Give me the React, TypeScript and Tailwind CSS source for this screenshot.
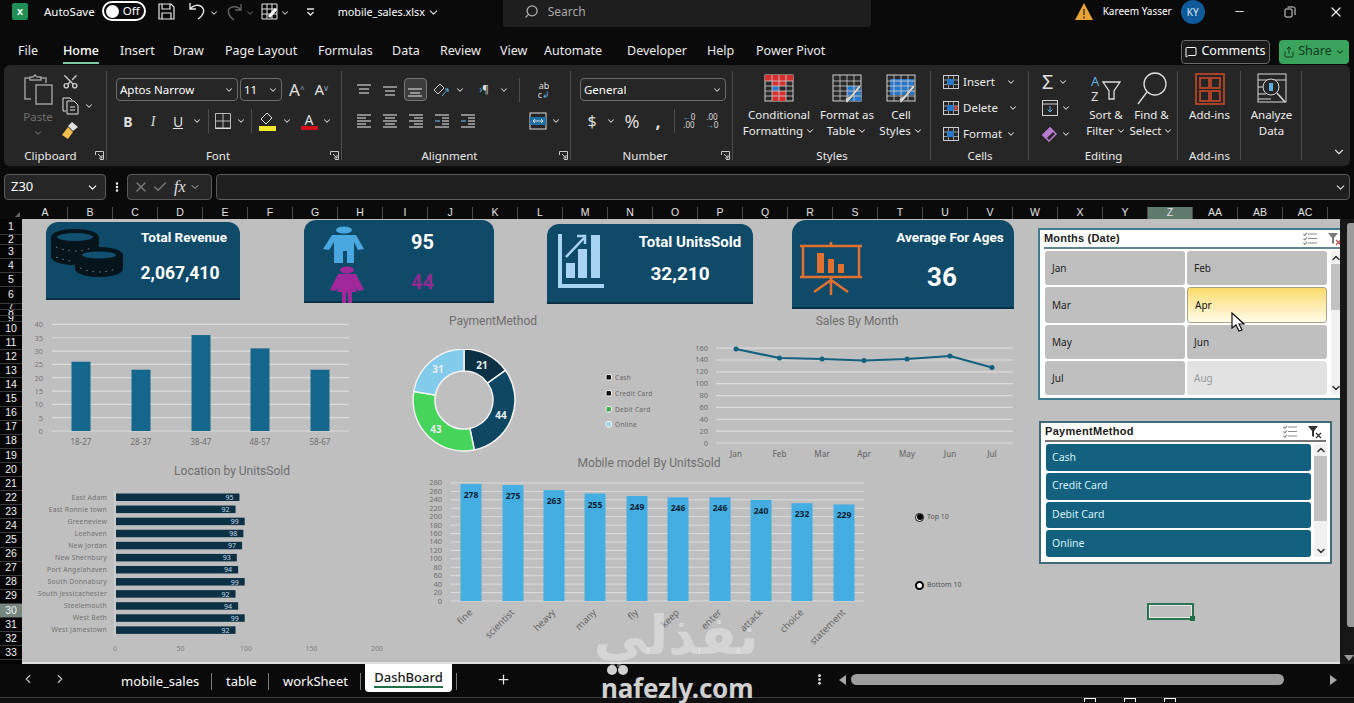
import React from 'react';
import { ChevronDown, ChevronLeft, ChevronRight, Plus, Search, X, Check, Minus, MessageSquare, Share, Scissors, MoreVertical } from 'lucide-react';

const COLS = ['A','B','C','D','E','F','G','H','I','J','K','L','M','N','O','P','Q','R','S','T','U','V','W','X','Y','Z','AA','AB','AC'];
const ROWS: [string, string][] = [
  ['1','h-[16px]'],['2','h-[10px]'],['3','h-[14px]'],['4','h-[14px]'],['5','h-[14px]'],['6','h-[17px]'],['7','h-[6px]'],['8','h-[6px]'],['9','h-[6px]'],
  ...Array.from({ length: 24 }, (_, i) => [String(i + 10), 'h-[14.1px]'] as [string, string]),
];
const TABS = [
  ['File','w-[45px]'],['Home','w-[57px]'],['Insert','w-[53px]'],['Draw','w-[52px]'],['Page Layout','w-[93px]'],['Formulas','w-[74px]'],
  ['Data','w-[48px]'],['Review','w-[60px]'],['View','w-[44px]'],['Automate','w-[83px]'],['Developer','w-[80px]'],['Help','w-[49px]'],['Power Pivot','w-[90px]'],
];
const AGE = [[81,26,'18-27'],[141,23,'28-37'],[201,36,'38-47'],[260,31,'48-57'],[320,23,'58-67']] as const;
const MONTHS = [['Jan',736,349],['Feb',779.5,358],['Mar',822,359],['Apr',864,360.5],['May',907,359],['Jun',950,356],['Jul',992,367.5]] as const;
const LOCATIONS: [string, number][] = [['East Adam',95],['East Ronnie town',92],['Greeneview',99],['Leehaven',98],['New Jordan',97],['New Shernbury',93],['Port Angelahaven',94],['South Donnabury',99],['South Jessicachester',92],['Steelemouth',94],['West Beth',99],['West Jamestown',92]];
const MODELS: [string, number, number][] = [['fine',278,471],['scientist',275,513],['heavy',263,554],['many',255,595],['fly',249,637],['keep',246,678],['enter',246,720],['attack',240,761],['choice',232,802],['statement',229,844]];
const DONUT: [number, string, number, number][] = [[21,'#0c3044',482,365],[44,'#0f4763',501,415],[43,'#47d45a',436,429],[31,'#83cbeb',438,369]];

function arc(start: number, end: number, R: number, r: number) {
  const p = (a: number, q: number) => `${464 + q * Math.sin(a)} ${400 - q * Math.cos(a)}`;
  const big = end - start > Math.PI ? 1 : 0;
  return `M${p(start, R)}A${R} ${R} 0 ${big} 1 ${p(end, R)}L${p(end, r)}A${r} ${r} 0 ${big} 0 ${p(start, r)}Z`;
}

function Chev({ className = '' }: { className?: string }) {
  return <ChevronDown size={10} strokeWidth={2.5} className={`text-[#d6d6d6] shrink-0 ${className}`} />;
}

function Lines({ rows, color = '#d0d0d0' }: { rows: [number, number, number, string?][]; color?: string }) {
  return (
    <svg width="16" height="16" viewBox="0 0 16 16">
      {rows.map(([a, b, y, c], i) => <line key={i} x1={a} x2={b} y1={y} y2={y} stroke={c || color} strokeWidth="1.2" />)}
    </svg>
  );
}

function Launcher() {
  return (
    <svg width="9" height="9" viewBox="0 0 9 9" className="absolute right-[3px] bottom-[6px]" fill="none" stroke="#c8c8c8">
      <path d="M.5 4V.5H8.5V8.5H5M3 3l4 4M7 4v3H4" />
    </svg>
  );
}

function Group({ width, label, launcher, labelPad = '', children }: { width: string; label?: string; launcher?: boolean; labelPad?: string; children: React.ReactNode }) {
  return (
    <div className={`relative h-full shrink-0 flex flex-col ${width}`}>
      <div className="h-[83px] relative">{children}</div>
      <div className={`text-center text-[11.5px] leading-[16px] text-[#e8e8e8] ${labelPad}`}>{label}</div>
      {launcher && <Launcher />}
      <div className="absolute right-0 top-[6px] bottom-[6px] w-px bg-[#4d4d4d]" />
    </div>
  );
}

function Cell({ w, children }: { w: string; children?: React.ReactNode }) {
  return <div className={`flex items-center justify-center shrink-0 h-full ${w}`}>{children}</div>;
}

function Divider({ w }: { w: string }) {
  return <div className={`flex justify-center shrink-0 ${w}`}><div className="w-px h-[24px] bg-[#4d4d4d]" /></div>;
}

function BigButton({ w, lines, caret, icon }: { w: string; lines: string[]; caret?: boolean; icon: React.ReactNode }) {
  return (
    <div className={`flex flex-col items-center shrink-0 ${w}`}>
      <div className="h-[37px] flex items-center justify-center">{icon}</div>
      {lines.map((l, i) => (
        <div key={l} className="flex items-center gap-[2px] text-[11.5px] leading-[16px] text-[#ececec] whitespace-nowrap">
          {l}{caret && i === lines.length - 1 && <Chev />}
        </div>
      ))}
    </div>
  );
}

function TableIcon({ fill }: { fill: React.ReactNode }) {
  return (
    <svg width="34" height="32" viewBox="0 0 34 32" fill="none">
      <rect x="3" y="2" width="28" height="26" fill="#2a2a2a" stroke="#cfcfcf" />
      {fill}
      {[8,13,18,23].map(y => <line key={y} x1="3" x2="31" y1={y} y2={y} stroke="#cfcfcf" strokeWidth=".8" />)}
      {[10,17,24].map(x => <line key={x} y1="2" y2="28" x1={x} x2={x} stroke="#cfcfcf" strokeWidth=".8" />)}
    </svg>
  );
}

function Brush() {
  return <path d="M31 14L20 27l-3 3c-2-1-2-3-1-5l4-2 9-11z" fill="#d8d8d8" stroke="#222" strokeWidth=".6" />;
}

function SmallTableIcon({ accent, x }: { accent: string; x?: boolean }) {
  return (
    <svg width="16" height="16" viewBox="0 0 16 16" fill="none">
      <rect x=".5" y="1.5" width="15" height="13" stroke="#cfcfcf" />
      <path d="M.5 6h15M.5 10.500h15M5.500 1.500v13M10.500 1.500v13" stroke="#cfcfcf" strokeWidth=".7" />
      <rect x="4" y="5" width="7" height="6" fill={accent} />
      {x && <path d="M11 6l4 4m0-4l-4 4" stroke="#e0504a" strokeWidth="1.3" />}
    </svg>
  );
}

function SlicerIcons({ light }: { light?: boolean }) {
  return (
    <div className="flex items-center gap-[11px]">
      <svg width="14" height="13" viewBox="0 0 14 13" fill="none" stroke="#8a8a8a" strokeWidth="1.2">
        <path d="M5 2h9M5 6.500h9M5 11h9M.5 2l1.300 1.300L4 .8M.5 6.500l1.300 1.300L4 5.300M.5 11l1.300 1.300L4 9.800" />
      </svg>
      <svg width="14" height="14" viewBox="0 0 14 14">
        <path d="M0 1h10L6 6v6L4 11V6z" fill={light ? '#7a7a7a' : '#333'} />
        <path d="M8 8l5 5m0-5l-5 5" stroke={light ? '#c0504d' : '#333'} strokeWidth="1.300" />
      </svg>
    </div>
  );
}

function ScrollStrip({ className, thumb }: { className: string; thumb: string }) {
  return (
    <div className={`flex flex-col items-center justify-between bg-[#f1f1f1] ${className}`}>
      <ChevronDown size={12} strokeWidth={3} className="rotate-180 text-[#333] shrink-0" />
      <div className={`w-full bg-[#c2c2c2] shrink-0 ${thumb}`} />
      <div className="flex-1" />
      <ChevronDown size={12} strokeWidth={3} className="text-[#333] shrink-0" />
    </div>
  );
}

function Sheet() {
  return (
    <div className="relative flex-1 h-full bg-[#bfbfbf] overflow-hidden border-b-2 border-[#e0e0e0]">
      {/* KPI cards */}
      <div className="absolute left-[24px] top-[3px] w-[194px] h-[78px] rounded-t-[12px] bg-[#0f4a68] border-b-2 border-[#0b3146] flex font-['Roboto',sans-serif]">
        <svg width="74" height="50" viewBox="0 0 74 50" className="mt-[7px] ml-[4px] shrink-0">
          <g fill="#06141c">
            <ellipse cx="25" cy="8" rx="24" ry="8" /><rect x="1" y="8" width="48" height="20" /><ellipse cx="25" cy="28" rx="24" ry="8" />
            <ellipse cx="49" cy="26" rx="24" ry="8" /><rect x="25" y="26" width="48" height="14" /><ellipse cx="49" cy="40" rx="24" ry="8" />
          </g>
          <ellipse cx="25" cy="8" rx="18" ry="4" fill="#12506f" /><ellipse cx="49" cy="26" rx="17" ry="3.500" fill="#12506f" />
          <path d="M6 18q19 8 38 0M6 28q8 3 15 4M30 39q19 8 38 0" fill="none" stroke="#7d8c94" strokeWidth="1" strokeDasharray="1.500 5" />
        </svg>
        <div className="flex-1 flex flex-col items-center pt-[6px] pr-[4px] text-white font-bold">
          <div className="text-[13.500px] leading-[18px] ml-[8px]">Total Revenue</div>
          <div className="text-[17.500px] leading-[24px] mt-[15px]">2,067,410</div>
        </div>
      </div>

      <div className="absolute left-[282px] top-[1px] w-[190px] h-[83px] rounded-t-[12px] bg-[#0f4a68] border-b-2 border-[#0b3146] flex font-['Roboto',sans-serif]">
        <svg width="50" height="80" viewBox="0 0 50 80" className="ml-[15px] mt-[3px] shrink-0">
          <g fill="#4aa8e0">
            <ellipse cx="25" cy="7" rx="8" ry="3.500" />
            <path d="M13 12h24l8 14 -6 1-4-8v21H28V28h-4v12H15V19l-5 8-6-1z" />
          </g>
          <g fill="#a0289a">
            <ellipse cx="28" cy="47" rx="7" ry="3.500" />
            <path d="M19 51h18l8 16-6 1-3-4 2 5H33v11h-4V70h-2v10h-4V69h-5l2-5-3 4-6-1z" />
          </g>
        </svg>
        <div className="flex-1 flex flex-col items-center pr-[18px] font-bold text-[20px] leading-[26px]">
          <div className="text-white mt-[9px]">95</div>
          <div className="text-[#8e2a90] mt-[14px]">44</div>
        </div>
      </div>

      <div className="absolute left-[525px] top-[5px] w-[206px] h-[80px] rounded-t-[12px] bg-[#0f4a68] border-b-2 border-[#0b3146] flex font-['Roboto',sans-serif]">
        <svg width="46" height="56" viewBox="0 0 46 56" className="ml-[11px] mt-[10px] shrink-0">
          <g fill="#a9d3f2">
            <path d="M0 0h4v50h42v4H0z" /><rect x="8" y="29" width="9" height="15" /><rect x="20" y="15" width="9" height="29" /><rect x="33" y="1" width="9" height="43" />
          </g>
          <path d="M8 23L26 4M19 2h8v8" fill="none" stroke="#a9d3f2" strokeWidth="2.500" />
        </svg>
        <div className="flex-1 flex flex-col items-center text-white font-bold pl-[3px]">
          <div className="text-[15px] leading-[20px] mt-[8px] ml-[20px]">Total UnitsSold</div>
          <div className="text-[19px] leading-[26px] mt-[9px]">32,210</div>
        </div>
      </div>

      <div className="absolute left-[770px] top-[1px] w-[222px] h-[89px] rounded-t-[14px] bg-[#0f4a68] border-b-2 border-[#0b3146] flex font-['Roboto',sans-serif]">
        <svg width="64" height="56" viewBox="0 0 64 56" className="ml-[8px] mt-[22px] shrink-0">
          <g fill="none" stroke="#e2702e" strokeWidth="2.500">
            <path d="M0 4h62M3 4v30M59 4v30M0 35h62M31 0v4M31 35v18M31 38L14 50M31 38l17 12" />
          </g>
          <g fill="#e2702e"><rect x="17" y="11" width="7" height="20" /><rect x="28" y="17" width="6" height="14" /><rect x="38" y="22" width="6" height="9" /></g>
        </svg>
        <div className="flex-1 flex flex-col items-center text-white font-bold">
          <div className="text-[13.500px] leading-[18px] mt-[8px] ml-[22px]">Average For Ages</div>
          <div className="text-[26px] leading-[32px] mt-[15px] ml-[6px]">36</div>
        </div>
      </div>

      {/* age chart */}
      <svg className="absolute left-[8px] top-[91px]" width="345" height="140" viewBox="30 310 345 140">
        {[40,35,30,25,20,15,10,5,0].map(v => {
          const y = 431 - v * 2.665;
          return (
            <g key={v}>
              <line x1="52" x2="349" y1={y} y2={y} stroke="#dcdcdc" strokeWidth="1.200" />
              <text x="43" y={y + 3} textAnchor="end" fontSize="7.500" fill="#777">{v}</text>
            </g>
          );
        })}
        {AGE.map(([x, v, l]) => (
          <g key={l}>
            <rect x={x - 9.500} y={431 - v * 2.665} width="19" height={v * 2.665} fill="#14668c" />
            <text x={x} y="445" textAnchor="middle" fontSize="8" fill="#6d6d6d">{l}</text>
          </g>
        ))}
      </svg>

      {/* donut */}
      <div className="absolute left-[391px] top-[94px] w-[160px] text-center font-['Roboto',sans-serif] text-[12px] leading-[16px] text-[#6e6e6e]">PaymentMethod</div>
      <svg className="absolute left-[380px] top-[130px]" width="260" height="115" viewBox="402 349 260 115">
        {DONUT.reduce<{ a: number; els: React.ReactNode[] }>((acc, [v, c, lx, ly]) => {
          const next = acc.a + (v / 139) * Math.PI * 2;
          acc.els.push(
            <g key={v}>
              <path d={arc(acc.a, next, 51, 29)} fill={c} stroke="#f2f2f2" strokeWidth="1.500" />
              <text x={lx} y={ly + 3.500} textAnchor="middle" fontSize="10" fontWeight="700" fill="#e8eef0">{v}</text>
            </g>
          );
          acc.a = next;
          return acc;
        }, { a: 0, els: [] }).els}
        {[['Cash','#111',377],['Credit Card','#111',393],['Debit Card','#47a84f',409],['Online','#9bd5e8',424]].map(([l, c, y]) => (
          <g key={l as string}>
            <rect x="606" y={(y as number) - 2.500} width="5.500" height="5.500" rx="1.500" fill={c as string} stroke="#f4f4f4" />
            <text x="615" y={(y as number) + 2.500} fontSize="6.500" fill="#666" letterSpacing=".3">{l}</text>
          </g>
        ))}
      </svg>

      {/* sales by month */}
      <div className="absolute left-[755px] top-[94px] w-[160px] text-center font-['Roboto',sans-serif] text-[12px] leading-[16px] text-[#6e6e6e]">Sales By Month</div>
      <svg className="absolute left-[668px] top-[122px]" width="350" height="118" viewBox="690 341 350 118">
        {[160,140,120,100,80,60,40,20,0].map(v => {
          const y = 443 - v * 0.593;
          return (
            <g key={v}>
              <line x1="716" x2="1013" y1={y} y2={y} stroke="#dcdcdc" strokeWidth="1.200" />
              <text x="708" y={y + 2.500} textAnchor="end" fontSize="7.500" fill="#6d6d6d">{v}</text>
            </g>
          );
        })}
        <polyline points={MONTHS.map(m => `${m[1]},${m[2]}`).join(' ')} fill="none" stroke="#14607f" strokeWidth="2.200" />
        {MONTHS.map(([l, x, y]) => (
          <g key={l}>
            <circle cx={x} cy={y} r="2.500" fill="#14607f" />
            <text x={x} y="457" textAnchor="middle" fontSize="8" fontWeight="500" fill="#6d6d6d">{l}</text>
          </g>
        ))}
      </svg>

      {/* location */}
      <div className="absolute left-[130px] top-[244px] w-[160px] text-center font-['Roboto',sans-serif] text-[12px] leading-[16px] text-[#6e6e6e]">Location by UnitsSold</div>
      <svg className="absolute left-[8px] top-[270px]" width="370" height="172" viewBox="30 489 370 172">
        <line x1="115" x2="115" y1="491" y2="637" stroke="#d8d8d8" />
        {LOCATIONS.map(([l, v], i) => {
          const y = 497 + i * 12.080;
          return (
            <g key={l}>
              <text x="107" y={y + 2.500} textAnchor="end" fontSize="6.800" fill="#727272" letterSpacing=".2">{l}</text>
              <rect x="116" y={y - 3.500} width={v * 1.31 - 1} height="7.500" fill="#0c3044" />
              <text x={116 + v * 1.31 - 7} y={y + 3} textAnchor="end" fontSize="7" fill="#c5dbe8">{v}</text>
            </g>
          );
        })}
        {[0,50,100,150,200].map(v => <text key={v} x={115 + v * 1.31} y="651" textAnchor="middle" fontSize="7" fill="#808080">{v}</text>)}
      </svg>

      {/* mobile models */}
      <div className="absolute left-[537px] top-[236px] w-[180px] text-center font-['Roboto',sans-serif] text-[12px] leading-[16px] text-[#6e6e6e]">Mobile model By UnitsSold</div>
      <svg className="absolute left-[398px] top-[258px]" width="480" height="180" viewBox="420 477 480 180">
        {Array.from({ length: 15 }, (_, i) => i * 20).map(v => {
          const y = 601 - v * 0.4215;
          return (
            <g key={v}>
              <line x1="450" x2="864" y1={y} y2={y} stroke="#dcdcdc" strokeWidth="1" />
              <text x="442" y={y + 2.500} textAnchor="end" fontSize="7.500" fill="#707070">{v}</text>
            </g>
          );
        })}
        {MODELS.map(([l, v, x]) => {
          const top = 601 - v * 0.4215;
          return (
            <g key={l}>
              <rect x={x - 10.500} y={top} width="21" height={601 - top} fill="#44ade2" />
              <text x={x} y={top + 14} textAnchor="middle" fontSize="8.500" fontWeight="700" fill="#0d2233">{v}</text>
              <text transform={`translate(${x + 2} 613) rotate(-45)`} textAnchor="end" fontSize="9.500" fill="#666">{l}</text>
            </g>
          );
        })}
      </svg>

      {/* radio buttons */}
      <div className="absolute left-[893px] top-[293px] flex items-center gap-[3px] text-[7px] text-[#555]">
        <div className="w-[9px] h-[9px] rounded-full border border-black bg-white flex items-center justify-center"><div className="w-[6px] h-[6px] rounded-full bg-black" /></div>
        Top 10
      </div>
      <div className="absolute left-[893px] top-[361px] flex items-center gap-[3px] text-[7px] text-[#555]">
        <div className="w-[9px] h-[9px] rounded-full border-2 border-black bg-white" />
        Bottom 10
      </div>

      {/* months slicer */}
      <div className="absolute left-[1016px] top-[9px] w-[310px] h-[172px] bg-white border-2 border-[#3b7b8c] flex flex-col font-['Noto_Sans',sans-serif] text-[#222]">
        <div className="h-[19px] mx-[4px] flex items-center justify-between border-b-2 border-[#5d8794] shrink-0">
          <span className="font-['Liberation_Sans',sans-serif] font-bold text-[11px] text-[#1b1b1b] tracking-[.2px]">Months (Date)</span>
          <SlicerIcons light />
        </div>
        <div className="flex flex-1 pt-[2px] pl-[5px] pb-[3px]">
          <div className="grid grid-cols-2 gap-x-[2px] gap-y-[2px] w-[282px] shrink-0 text-[10px]">
            {['Jan','Feb','Mar','Apr','May','Jun','Jul','Aug'].map(m => (
              <div key={m} className={`flex items-center pl-[7px] rounded-[3px] ${m === 'Apr' ? 'bg-gradient-to-b from-[#fbdb66] to-[#fffbe8] border border-[#a8a488] text-[#111]' : m === 'Aug' ? 'bg-[#e2e2e2] text-[#9a9a9a]' : 'bg-[#bfbfbf] text-[#222]'}`}>{m}</div>
            ))}
          </div>
          <ScrollStrip className="w-[9px] ml-[4px] py-[1px]" thumb="h-[46px]" />
        </div>
      </div>

      {/* payment slicer */}
      <div className="absolute left-[1017px] top-[202px] w-[293px] h-[143px] bg-white border-2 border-[#3f6a78] flex flex-col text-[#d4f1f8]">
        <div className="h-[19px] mx-[4px] flex items-center justify-between border-b-2 border-[#777] pr-[4px] shrink-0">
          <span className="font-['Liberation_Sans',sans-serif] font-bold text-[11px] text-[#1b1b1b] tracking-[.3px]">PaymentMethod</span>
          <SlicerIcons />
        </div>
        <div className="flex flex-1 pl-[5px] pt-[2px] pb-[5px]">
          <div className="w-[265px] shrink-0 flex flex-col gap-[2px] text-[10.500px]">
            {['Cash','Credit Card','Debit Card','Online'].map(p => (
              <div key={p} className="flex-1 flex items-center pl-[6px] rounded-[3px] bg-[#14607f]">{p}</div>
            ))}
          </div>
          <ScrollStrip className="w-[13px] ml-[3px]" thumb="h-[65px]" />
        </div>
      </div>

      {/* selected cell */}
      <div className="absolute left-[1125px] top-[384px] w-[47px] h-[17px] border-2 border-[#2d7550] shadow-[inset_0_0_0_1px_#e8e8e8]">
        <div className="absolute -right-[3px] -bottom-[3px] w-[5px] h-[5px] bg-[#1f6f47]" />
      </div>

      {/* cursor */}
      <svg className="absolute left-[1209px] top-[93px]" width="14" height="20" viewBox="0 0 14 20">
        <path d="M1 1v15l4-3 3 6 3-1-3-6h5z" fill="#fff" stroke="#111" strokeWidth="1.200" />
      </svg>
    </div>
  );
}

export default function App() {
  return (
    <div className="w-[1354px] h-[703px] overflow-hidden relative bg-[#0a0a0a] text-white font-['Noto_Sans',sans-serif]">
      {/* title bar */}
      <div className="h-[38px] flex items-start">
        <div className="ml-[12px] mt-[3px] w-[16px] h-[17px] rounded-[2px] bg-[#1f8f55] flex items-center justify-center text-[9px] font-bold">X</div>
        <div className="ml-[16px] mt-[3px] text-[11.500px] leading-[17px]">AutoSave</div>
        <div className="ml-[7px] mt-[1px] w-[44px] h-[20px] rounded-full border-2 border-white flex items-center pl-[2px] gap-[4px]">
          <div className="w-[13px] h-[13px] rounded-full bg-white" />
          <span className="text-[11.500px]">Off</span>
        </div>
        <svg className="ml-[12px] mt-[3px]" width="17" height="17" viewBox="0 0 17 17" fill="none" stroke="#e6e6e6" strokeWidth="1.200">
          <path d="M1 1h12l3 3v12H1zM4 1v5h8V1M4 16v-6h9v6" />
        </svg>
        <svg className="ml-[13px] mt-[2px]" width="20" height="19" viewBox="0 0 20 19" fill="none" stroke="#e6e6e6" strokeWidth="1.400">
          <path d="M2 1v6h6M2 7c3-4 9-5 12-2s2 8-4 12" />
        </svg>
        <Chev className="ml-[1px] mt-[8px]" />
        <svg className="ml-[7px] mt-[3px] opacity-40" width="17" height="18" viewBox="0 0 17 18" fill="none" stroke="#e6e6e6" strokeWidth="1.400">
          <path d="M15 1v6H9M15 7C12 3 7 3 4 5s-2 8 4 12" />
        </svg>
        <Chev className="ml-[2px] mt-[8px] opacity-40" />
        <svg className="ml-[6px] mt-[3px]" width="17" height="17" viewBox="0 0 17 17" fill="none" stroke="#e6e6e6">
          <path d="M1 1h15v15H1zM1 6h15M1 11h15M6 1v15M11 1v15" />
          <path d="M8 14l7-8" stroke="#fff" strokeWidth="3" />
        </svg>
        <Chev className="ml-[2px] mt-[8px]" />
        <svg className="ml-[16px] mt-[8px]" width="9" height="9" viewBox="0 0 9 9" fill="none" stroke="#e6e6e6" strokeWidth="1.300">
          <path d="M1 1h7M1.500 4l3 3 3-3" />
        </svg>
        <div className="ml-[23px] mt-[3px] w-[85px] shrink-0 text-[10.800px] leading-[18px] whitespace-nowrap">mobile_sales.xlsx</div>
        <ChevronDown size={13} strokeWidth={2} className="ml-[4px] mt-[6px] text-[#e6e6e6]" />
        <div className="ml-[63px] w-[368px] h-[27px] bg-[#1e1e1e] rounded-b-[3px] flex items-center pl-[21px] pb-[4px] gap-[9px] text-[12px] text-[#a8a8a8] shrink-0">
          <Search size={15} className="-scale-x-100 text-[#b0b0b0]" />
          Search
        </div>
        <svg className="ml-[204px] mt-[3px]" width="18" height="17" viewBox="0 0 18 17">
          <path d="M9 0l9 17H0z" fill="#e8a33a" />
          <path d="M9 6v6M9 13.500v2" stroke="#3a2a10" strokeWidth="1.300" />
        </svg>
        <div className="ml-[10px] mt-[3px] text-[10px] leading-[17px] whitespace-nowrap w-[71px] shrink-0">Kareem Yasser</div>
        <div className="ml-[7px] w-[24px] h-[24px] rounded-full bg-[#0f5a9a] flex items-center justify-center text-[10px] text-[#d8e6f2] shrink-0">KY</div>
        <Minus size={13} className="ml-[28px] mt-[5px] text-[#dcdcdc]" />
        <svg className="ml-[38px] mt-[6px]" width="12" height="12" viewBox="0 0 12 12" fill="none" stroke="#dcdcdc">
          <rect x="1" y="3" width="7" height="8" rx="1" /><path d="M3.500 1h6a1.500 1.500 0 0 1 1.500 1.500V9" />
        </svg>
        <X size={16} className="ml-[32px] mt-[4px] text-[#e6e6e6]" />
      </div>

      {/* ribbon tabs */}
      <div className="h-[27px] flex items-center pl-[18px]">
        {TABS.map(([t, w]) => (
          <div key={t} className={`${w} text-[12.500px] whitespace-nowrap shrink-0`}>
            <span className={`relative inline-block ${t === 'Home' ? 'font-medium' : 'text-[#ececec]'}`}>
              {t}
              {t === 'Home' && <span className="absolute left-0 right-0 -bottom-[3px] h-[2px] bg-[#7fc9a6]" />}
            </span>
          </div>
        ))}
        <div className="ml-auto flex items-center gap-[9px] pr-[5px]">
          <div className="w-[89px] h-[24px] rounded-[4px] border border-[#6a6a6a] bg-[#1a1a1a] flex items-center justify-center gap-[4px] text-[12.500px]">
            <MessageSquare size={12} />Comments
          </div>
          <div className="w-[70px] h-[24px] rounded-[4px] bg-[#3aa35c] flex items-center justify-center gap-[3px] text-[12.500px] text-[#123a1e]">
            <Share size={12} />Share<Chev className="!text-[#123a1e]" />
          </div>
        </div>
      </div>

      {/* ribbon */}
      <div className="mx-[4px] h-[101px] rounded-[6px] bg-[#262626] flex relative">
        <Group width="w-[103px]" label="Clipboard" launcher labelPad="pr-[10px]">
          <div className="flex h-full">
            <div className="ml-[18px] w-[32px] flex flex-col items-center pt-[9px] shrink-0">
              <svg width="29" height="31" viewBox="0 0 29 31" fill="none" stroke="#9a9a9a" strokeWidth="1.500">
                <path d="M7 25H1V4h5M17 4h5v5M6 6V3h3l2-2 2 2h4v3z" /><rect x="12" y="11" width="16" height="19" />
              </svg>
              <div className="text-[11.500px] leading-[14px] mt-[5px] text-[#6e6e6e]">Paste</div>
              <Chev className="mt-[4px] opacity-40" />
            </div>
            <div className="ml-[8px] flex flex-col items-start pt-[8px] gap-[7px]">
              <Scissors size={17} className="text-[#c8c8c8] -rotate-90" />
              <div className="flex items-center gap-[5px]">
                <svg width="17" height="18" viewBox="0 0 17 18" fill="none" stroke="#dedede"><path d="M4 14H1V1h7l2 2" /><path d="M5 4h7l4 4v9H5zM8 10h5M8 13h5" /></svg>
                <Chev />
              </div>
              <svg width="17" height="18" viewBox="0 0 17 18">
                <path d="M10 0l6 5-5 4-5-5z" fill="#e0e0e0" /><path d="M6 5l5 5-5 7-6-4z" fill="#f0c050" />
              </svg>
            </div>
          </div>
        </Group>

        <Group width="w-[235px]" label="Font" launcher labelPad="pr-[13px]">
          <div className="ml-[9px] mt-[13px] flex items-center h-[23px]">
            <div className="w-[122px] h-[23px] rounded-[4px] border border-[#6a6a6a] flex items-center justify-between px-[3px] text-[11.500px]">Aptos Narrow<Chev /></div>
            <div className="ml-[2px] w-[42px] h-[23px] rounded-[4px] border border-[#6a6a6a] flex items-center justify-between px-[3px] text-[11.500px]">11<Chev /></div>
            <div className="ml-[7px] text-[17px] leading-none text-[#e0e0e0]">A<sup className="text-[8px] text-[#8fb8d8]">^</sup></div>
            <div className="ml-[10px] text-[15px] leading-none text-[#e0e0e0]">A<sup className="text-[8px] text-[#8fb8d8]">v</sup></div>
          </div>
          <div className="ml-[9px] mt-[8px] flex items-center h-[24px] text-[14px] text-[#dedede]">
            <Cell w="w-[24px]"><b>B</b></Cell>
            <Cell w="w-[26px]"><i className="font-['Liberation_Serif',serif]">I</i></Cell>
            <Cell w="w-[24px]"><u>U</u></Cell>
            <Cell w="w-[14px]"><Chev /></Cell>
            <Divider w="w-[8px]" />
            <Cell w="w-[22px]">
              <svg width="16" height="16" viewBox="0 0 16 16" fill="none" stroke="#dedede"><path d="M.5.5h15v15H.5zM8 .5v15M.5 8h15" strokeWidth=".8" /><path d="M.5 15.500h15" strokeWidth="2" /></svg>
            </Cell>
            <Cell w="w-[13px]"><Chev /></Cell>
            <Divider w="w-[9px]" />
            <Cell w="w-[24px]">
              <svg width="18" height="19" viewBox="0 0 18 19"><path d="M8 1L2 7l5 5 6-6z" fill="none" stroke="#dedede" /><rect x="0" y="14" width="17" height="5" fill="#f2e82e" /></svg>
            </Cell>
            <Cell w="w-[13px]"><Chev /></Cell>
            <Cell w="w-[7px]" />
            <Cell w="w-[18px]">
              <div className="flex flex-col items-center leading-[13px] text-[14px]">A<div className="w-[17px] h-[4px] bg-[#d0101a]" /></div>
            </Cell>
            <Cell w="w-[18px]"><Chev /></Cell>
          </div>
        </Group>

        <Group width="w-[229px]" label="Alignment" launcher labelPad="pr-[14px]">
          <div className="flex mt-[13px] h-[23px] items-center ml-[9px]">
            <Cell w="w-[26px]"><Lines rows={[[1,15,3],[3,13,7],[3,13,11]]} /></Cell>
            <Cell w="w-[26px]"><Lines rows={[[1,15,5],[3,13,9],[3,13,13]]} /></Cell>
            <Cell w="w-[24px]">
              <div className="w-[23px] h-[23px] rounded-[4px] border border-[#777] bg-[#3d3d3d] flex items-center justify-center"><Lines rows={[[1,15,7],[3,13,11],[1,15,14]]} /></div>
            </Cell>
            <Cell w="w-[28px]">
              <svg width="16" height="16" viewBox="0 0 16 16" fill="none" stroke="#d0d0d0"><path d="M1 8l6-6 4 4-6 6z" /><path d="M9 14l6-7m-3 0h3v3" stroke="#5fb0e0" /></svg>
            </Cell>
            <Cell w="w-[10px]"><Chev /></Cell>
            <Cell w="w-[7px]" />
            <Cell w="w-[24px]"><span className="text-[10px] text-[#dedede]"><span className="text-[#5fb0e0]">›</span>¶</span></Cell>
            <Cell w="w-[15px]"><Chev /></Cell>
            <Divider w="w-[16px]" />
            <Cell w="w-[7px]" />
            <Cell w="w-[20px]">
              <div className="text-[9px] leading-[9px] text-[#dedede] text-center">ab<br />c<span className="text-[#5fb0e0]">↲</span></div>
            </Cell>
          </div>
          <div className="flex mt-[8px] h-[24px] items-center ml-[9px]">
            <Cell w="w-[26px]"><Lines rows={[[1,15,2],[1,10,5],[1,15,8],[1,10,11],[1,15,14]]} /></Cell>
            <Cell w="w-[26px]"><Lines rows={[[1,15,2],[3,13,5],[1,15,8],[3,13,11],[1,15,14]]} /></Cell>
            <Cell w="w-[26px]"><Lines rows={[[1,15,2],[6,15,5],[1,15,8],[6,15,11],[1,15,14]]} /></Cell>
            <Cell w="w-[26px]"><Lines rows={[[1,15,2],[8,15,5],[1,6,8,'#5fb0e0'],[8,15,8],[8,15,11],[1,15,14]]} /></Cell>
            <Cell w="w-[26px]"><Lines rows={[[1,15,2],[8,15,5],[1,6,8,'#5fb0e0'],[8,15,8],[8,15,11],[1,15,14]]} /></Cell>
            <Cell w="w-[48px]" />
            <Cell w="w-[18px]">
              <svg width="18" height="18" viewBox="0 0 18 18" fill="none" stroke="#dedede"><rect x="1" y="1" width="16" height="16" /><rect x="1" y="5" width="16" height="8" fill="#1f6fa8" stroke="none" /><path d="M4 9h10M4 9l2-2M4 9l2 2M14 9l-2-2M14 9l-2 2" /></svg>
            </Cell>
            <Cell w="w-[18px]"><Chev /></Cell>
          </div>
        </Group>

        <Group width="w-[162px]" label="Number" launcher labelPad="pr-[14px]">
          <div className="ml-[9px] mt-[13px] w-[146px] h-[23px] rounded-[4px] border border-[#6a6a6a] flex items-center justify-between px-[3px] text-[11.500px]">General<Chev /></div>
          <div className="ml-[9px] mt-[8px] h-[24px] flex items-center text-[#dedede]">
            <Cell w="w-[24px]"><span className="text-[16px]">$</span></Cell>
            <Cell w="w-[14px]"><Chev /></Cell>
            <Cell w="w-[28px]"><span className="text-[18px]">%</span></Cell>
            <Cell w="w-[24px]"><span className="text-[18px] font-bold leading-none">,</span></Cell>
            <Divider w="w-[8px]" />
            <Cell w="w-[22px]"><span className="text-[8px] leading-[8px] text-center"><span className="text-[#5fb0e0]">←</span>0<br />.00</span></Cell>
            <Cell w="w-[24px]"><span className="text-[8px] leading-[8px] text-center">.00<br /><span className="text-[#5fb0e0]">→</span>0</span></Cell>
          </div>
        </Group>

        <Group width="w-[198px]" label="Styles">
          <div className="flex pt-[5px] pl-[10px]">
            <BigButton w="w-[72px]" lines={['Conditional','Formatting']} caret icon={
              <TableIcon fill={<><rect x="3" y="2" width="28" height="6" fill="#d83030" /><rect x="10" y="8" width="14" height="5" fill="#d83030" /><rect x="10" y="13" width="7" height="5" fill="#2a78c8" /><rect x="10" y="18" width="14" height="10" fill="#d83030" /></>} />
            } />
            <BigButton w="w-[64px]" lines={['Format as','Table']} caret icon={
              <TableIcon fill={<><rect x="17" y="13" width="14" height="15" fill="#2a78c8" /><Brush /></>} />
            } />
            <BigButton w="w-[44px]" lines={['Cell','Styles']} caret icon={
              <TableIcon fill={<><rect x="6" y="6" width="24" height="16" fill="#2a78c8" /><Brush /></>} />
            } />
          </div>
        </Group>

        <Group width="w-[98px]" label="Cells">
          <div className="pl-[12px] pt-[8px] flex flex-col gap-[8px] text-[11.500px] leading-[18px] text-[#ececec]">
            <div className="flex items-center gap-[4px]"><SmallTableIcon accent="#2a78c8" />Insert<Chev className="ml-[7px]" /></div>
            <div className="flex items-center gap-[4px]"><SmallTableIcon accent="#2a78c8" x />Delete<Chev className="ml-[6px]" /></div>
            <div className="flex items-center gap-[4px]"><SmallTableIcon accent="#2a78c8" />Format<Chev /></div>
          </div>
        </Group>

        <Group width="w-[149px]" label="Editing">
          <div className="flex pt-[5px]">
            <div className="ml-[13px] w-[42px] flex flex-col gap-[8px] shrink-0 pt-[3px]">
              <div className="h-[18px] flex items-center gap-[3px]"><span className="text-[20px] text-[#dedede] leading-none">Σ</span><Chev className="ml-[2px]" /></div>
              <div className="h-[18px] flex items-center gap-[3px]">
                <svg width="16" height="16" viewBox="0 0 16 16" fill="none" stroke="#cfcfcf"><rect x=".5" y=".5" width="15" height="15" /><path d="M1 4h14" /><path d="M8 6v6M5.500 9.500L8 12l2.500-2.500" stroke="#5fb0e0" /></svg>
                <Chev />
              </div>
              <div className="h-[18px] flex items-center gap-[3px]">
                <svg width="16" height="16" viewBox="0 0 16 16" fill="none" stroke="#b77bd0" strokeWidth="1.500"><path d="M1 9l7-7 6 6-7 7z" /><path d="M1 9l7-7 3 3-7 7z" fill="#b77bd0" /></svg>
                <Chev />
              </div>
            </div>
            <BigButton w="w-[44px]" lines={['Sort &','Filter']} caret icon={
              <svg width="32" height="30" viewBox="0 0 32 30" fill="none"><text x="1" y="12" fontSize="13" fill="#5fb0e0">A</text><text x="1" y="27" fontSize="13" fill="#dedede">Z</text><path d="M13 8h17l-6 9v8h-5v-8z" stroke="#dedede" strokeWidth="1.300" /></svg>
            } />
            <BigButton w="w-[47px]" lines={['Find &','Select']} caret icon={
              <svg width="30" height="34" viewBox="0 0 30 34" fill="none" stroke="#dedede" strokeWidth="1.300"><circle cx="18" cy="12" r="11" /><path d="M10 20L1 32" /></svg>
            } />
          </div>
        </Group>

        <Group width="w-[63px]" label="Add-ins">
          <div className="flex pt-[5px] justify-center">
            <BigButton w="w-[60px]" lines={['Add-ins']} icon={
              <svg width="30" height="34" viewBox="0 0 30 34" fill="none" stroke="#b8452a" strokeWidth="1.800"><rect x="1" y="2" width="28" height="30" /><rect x="5" y="6" width="9" height="10" /><rect x="16" y="6" width="9" height="10" /><rect x="5" y="19" width="9" height="10" /><rect x="16" y="19" width="9" height="10" /></svg>
            } />
          </div>
        </Group>

        <Group width="w-[61px]">
          <div className="flex pt-[5px] justify-center">
            <BigButton w="w-[60px]" lines={['Analyze','Data']} icon={
              <svg width="30" height="34" viewBox="0 0 30 34" fill="none" stroke="#d8d8d8"><rect x="1" y="2" width="28" height="28" /><path d="M1 8h28M1 15h6M1 22h8M1 27h13" /><circle cx="14" cy="15" r="8" fill="#262626" /><rect x="12" y="11" width="4" height="8" fill="#5fb0e0" stroke="none" /><path d="M20 21l8 9" strokeWidth="1.500" /></svg>
            } />
          </div>
        </Group>
        <ChevronDown size={14} className="absolute right-[4px] bottom-[7px] text-[#dedede]" />
      </div>

      {/* formula bar */}
      <div className="mt-[8px] h-[26px] flex items-stretch pl-[4px] pr-[4px]">
        <div className="w-[102px] rounded-[4px] border border-[#5a5a5a] bg-[#262626] flex items-center justify-between px-[6px] text-[13px]">Z30<ChevronDown size={13} /></div>
        <div className="w-[21px] flex justify-center items-center"><MoreVertical size={12} strokeWidth={3} /></div>
        <div className="w-[85px] rounded-[4px] border border-[#5a5a5a] bg-[#262626] flex items-center pl-[5px] text-[#7a7a7a] gap-[3px]">
          <X size={16} /><Check size={16} />
          <span className="font-['Liberation_Serif',serif] italic text-[16px] text-[#e0e0e0] ml-[3px]">fx</span>
          <ChevronDown size={12} className="text-[#bbb]" />
        </div>
        <div className="ml-[4px] flex-1 rounded-[4px] border border-[#5a5a5a] bg-[#1f1f1f] flex items-center justify-end pr-[2px]"><ChevronDown size={13} className="text-[#ddd]" /></div>
      </div>

      {/* column headers */}
      <div className="mt-[7px] h-[12px] flex font-['Liberation_Sans',sans-serif] text-[10.500px] leading-[11px] text-[#e4e4e4]">
        <div className="w-[23px] shrink-0 flex items-end justify-end pr-[3px] pb-[2px]">
          <div className="w-0 h-0 border-l-[5px] border-l-transparent border-b-[5px] border-b-[#666]" />
        </div>
        {COLS.map(c => (
          <div key={c} className={`w-[45px] shrink-0 text-center border-r border-[#4a4a4a] ${c === 'Z' ? 'bg-[#5f7a6c]' : ''}`}>{c}</div>
        ))}
      </div>

      {/* body */}
      <div className="h-[445px] flex">
        <div className="w-[22px] shrink-0 overflow-hidden font-['Liberation_Sans',sans-serif] text-[10.500px] text-[#f0f0f0] bg-[#050505]">
          {ROWS.map(([n, h]) => (
            <div key={n} className={`${h} overflow-hidden flex items-center justify-center border-b border-[#3a3a3a] ${n === '30' ? 'bg-[#75877e]' : ''}`}>{n}</div>
          ))}
        </div>
        <Sheet />
        <div className="w-[14px] shrink-0 relative bg-[#171717]">
          <div className="absolute right-0 top-[4px] w-[7px] h-[404px] rounded-l-[3px] bg-[#9b9b9b]" />
          <div className="absolute right-0 bottom-[3px] w-0 h-0 border-x-[5px] border-x-transparent border-t-[6px] border-t-[#9b9b9b]" />
        </div>
      </div>

      {/* sheet tabs */}
      <div className="h-[33px] flex items-start text-[13px] pt-0">
        <ChevronLeft size={14} className="ml-[21px] mt-[8px] text-[#bdbdbd]" />
        <ChevronRight size={14} className="ml-[18px] mt-[8px] text-[#bdbdbd]" />
        <div className="ml-[54px] mt-[8px] w-[105px] leading-[18px] relative">
          mobile_sales
          <div className="absolute right-[14px] top-[1px] w-px h-[17px] bg-[#7a7a7a]" />
        </div>
        <div className="w-[57px] mt-[8px] leading-[18px] relative">
          table
          <div className="absolute right-[14px] top-[1px] w-px h-[17px] bg-[#7a7a7a]" />
        </div>
        <div className="w-[82px] mt-[8px] leading-[18px] relative">
          workSheet
          <div className="absolute right-[4px] top-[1px] w-px h-[17px] bg-[#7a7a7a]" />
        </div>
        <div className="w-[87px] h-[28px] rounded-b-[4px] bg-white text-[#1b1b1b] flex flex-col items-center pt-[4px] font-medium leading-[18px] shrink-0">
          DashBoard
          <div className="w-[69px] h-[2px] bg-[#1f6f47]" />
        </div>
        <div className="ml-[4px] mt-[9px] w-px h-[17px] bg-[#7a7a7a]" />
        <Plus size={15} className="ml-[39px] mt-[8px] text-[#e8e8e8]" />
        <MoreVertical size={13} strokeWidth={3} className="ml-[302px] mt-[9px]" />
        <div className="ml-[13px] mt-[11px] w-0 h-0 border-y-[5px] border-y-transparent border-r-[7px] border-r-[#a8a8a8]" />
        <div className="ml-[5px] mt-[10px] w-[433px] h-[11px] rounded-full bg-[#9d9d9d]" />
        <div className="ml-[46px] mt-[11px] w-0 h-0 border-y-[5px] border-y-transparent border-l-[7px] border-l-[#a8a8a8]" />
      </div>
      <div className="h-[6px] border-t border-[#3a3a3a] bg-[#101010] flex justify-end gap-[28px] pr-[178px]">
        <div className="w-[12px] h-[4px] border-t border-x border-white" />
        <div className="w-[12px] h-[4px] border-t border-x border-white" />
        <div className="w-[12px] h-[4px] border-t border-x border-white" />
      </div>

      {/* watermark */}
      <div className="absolute left-[585px] top-[606px] w-[182px] text-center font-['DejaVu_Sans',sans-serif] font-bold text-[54px] leading-[60px] text-white/35" dir="rtl">نفذلي</div>
      <div className="absolute left-[601px] top-[673px] font-['Noto_Sans',sans-serif] font-bold text-[26px] leading-[30px] tracking-[-.2px] text-[#d0d0d0]">nafezly.com</div>
      <div className="absolute left-[607px] top-[665px] flex gap-[1px]">
        <div className="w-[10px] h-[10px] rounded-full bg-[#d0d0d0]" />
        <div className="w-[10px] h-[10px] rounded-full bg-[#d0d0d0]" />
      </div>
    </div>
  );
}
